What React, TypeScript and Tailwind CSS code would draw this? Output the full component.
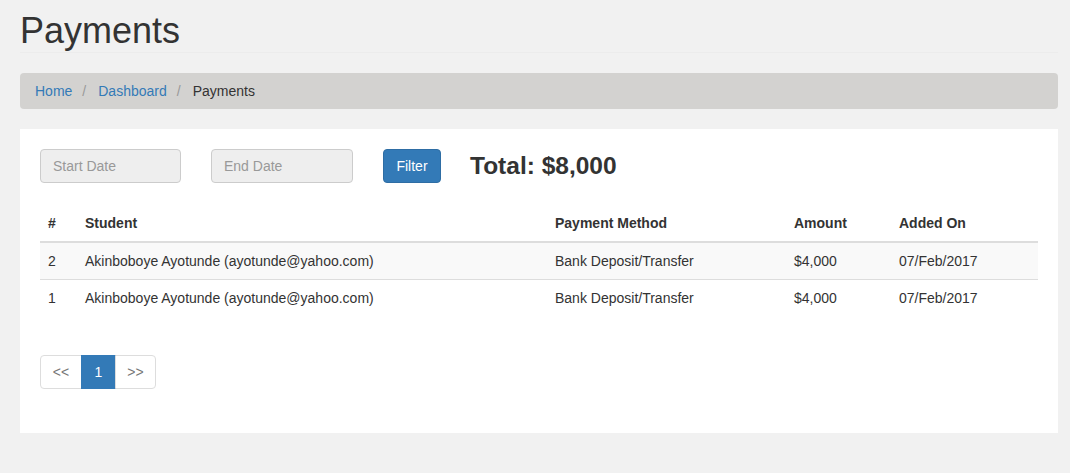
import React from "react";

const rows = [
  { id: 2, student: "Akinboboye Ayotunde (ayotunde@yahoo.com)", method: "Bank Deposit/Transfer", amount: "$4,000", date: "07/Feb/2017" },
  { id: 1, student: "Akinboboye Ayotunde (ayotunde@yahoo.com)", method: "Bank Deposit/Transfer", amount: "$4,000", date: "07/Feb/2017" },
];

export default function App() {
  return (
    <div
      className="min-h-[473px] bg-[#f1f1f1] pl-[20px] pr-[12px] pt-[11px] pb-[40px] text-[14px] leading-[20px] text-[#333]"
      style={{ fontFamily: '"Liberation Sans", Arial, Helvetica, sans-serif' }}
    >
      <div className="border-b border-[#ececec] pb-[1px]">
        <h1 className="text-[36px] leading-[39.6px] font-normal text-[#333]">Payments</h1>
      </div>

      <div className="mt-[20px] flex h-[36px] items-center rounded-[4px] bg-[#d3d2d0] px-[15px]">
        <a className="text-[#337ab7]">Home</a>
        <span className="ml-[10px] mr-[12px] text-[#999]">/</span>
        <a className="text-[#337ab7]">Dashboard</a>
        <span className="ml-[10px] mr-[12px] text-[#999]">/</span>
        <span className="text-[#333]">Payments</span>
      </div>

      <div className="mt-[20px] bg-white px-[20px] pt-[20px] pb-[44px]">
        <div className="flex items-center">
          <div className="flex h-[34px] w-[141px] items-center rounded-[4px] border border-[#ccc] bg-[#eee] px-[12px] text-[#999]">
            Start Date
          </div>
          <div className="ml-[30px] flex h-[34px] w-[142px] items-center rounded-[4px] border border-[#ccc] bg-[#eee] px-[12px] text-[#999]">
            End Date
          </div>
          <button className="ml-[30px] flex h-[34px] w-[58px] items-center justify-center rounded-[4px] border border-[#2e6da4] bg-[#337ab7] text-white">
            Filter
          </button>
          <div className="ml-[29px] text-[24.5px] leading-[26px] font-bold text-[#333]">Total: $8,000</div>
        </div>

        <table className="mt-[22px] w-full border-collapse">
          <thead>
            <tr>
              <th className="w-[37px] border-b-2 border-[#ddd] p-[8px] text-left font-bold">#</th>
              <th className="w-[470px] border-b-2 border-[#ddd] p-[8px] text-left font-bold">Student</th>
              <th className="w-[239px] border-b-2 border-[#ddd] p-[8px] text-left font-bold">Payment Method</th>
              <th className="w-[105px] border-b-2 border-[#ddd] p-[8px] text-left font-bold">Amount</th>
              <th className="border-b-2 border-[#ddd] p-[8px] text-left font-bold">Added On</th>
            </tr>
          </thead>
          <tbody>
            {rows.map((r, i) => (
              <tr key={r.id} className={i % 2 === 0 ? "bg-[#f9f9f9]" : ""}>
                <td className={`p-[8px] ${i > 0 ? "border-t border-[#ddd]" : ""}`}>{r.id}</td>
                <td className={`p-[8px] ${i > 0 ? "border-t border-[#ddd]" : ""}`}>{r.student}</td>
                <td className={`p-[8px] ${i > 0 ? "border-t border-[#ddd]" : ""}`}>{r.method}</td>
                <td className={`p-[8px] ${i > 0 ? "border-t border-[#ddd]" : ""}`}>{r.amount}</td>
                <td className={`p-[8px] ${i > 0 ? "border-t border-[#ddd]" : ""}`}>{r.date}</td>
              </tr>
            ))}
          </tbody>
        </table>

        <div className="mt-[39px] flex">
          <span className="flex h-[34px] w-[42px] items-center justify-center rounded-l-[4px] border border-[#ddd] text-[#777]">
            &lt;&lt;
          </span>
          <span className="-ml-px flex h-[34px] w-[35px] items-center justify-center border border-[#337ab7] bg-[#337ab7] text-white">
            1
          </span>
          <span className="-ml-px flex h-[34px] w-[41px] items-center justify-center rounded-r-[4px] border border-[#ddd] text-[#777]">
            &gt;&gt;
          </span>
        </div>
      </div>
    </div>
  );
}
